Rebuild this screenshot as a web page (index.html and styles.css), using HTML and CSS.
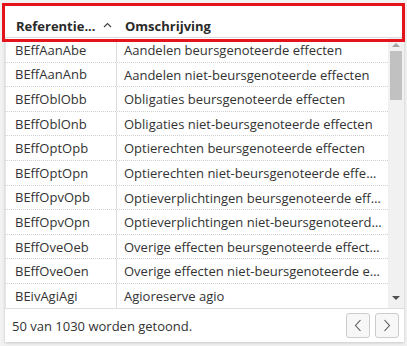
FILE: index.html
```html
<!DOCTYPE html>
<html lang="nl">
<head>
    <meta charset="UTF-8">
    <title>Referenties</title>
    <link rel="stylesheet" href="styles.css">
</head>
<body>
    <div class="panel">
        <!-- header row -->
        <div class="head">
            <div class="hcell ref"><span class="label">Referentie...</span>
                <svg class="sort" width="9" height="6" viewBox="0 0 9 6"><path d="M1 5 L4.5 1.5 L8 5" fill="none" stroke="#444" stroke-width="1.2"/></svg>
            </div>
            <div class="hcell desc">Omschrijving</div>
        </div>
        <div class="highlight"></div>

        <div class="body">
            <div class="rows">
                <div class="row"><div class="cell ref">BEffAanAbe</div><div class="cell desc">Aandelen beursgenoteerde effecten</div></div>
                <div class="row"><div class="cell ref">BEffAanAnb</div><div class="cell desc">Aandelen niet-beursgenoteerde effecten</div></div>
                <div class="row"><div class="cell ref">BEffOblObb</div><div class="cell desc">Obligaties beursgenoteerde effecten</div></div>
                <div class="row"><div class="cell ref">BEffOblOnb</div><div class="cell desc">Obligaties niet-beursgenoteerde effecten</div></div>
                <div class="row"><div class="cell ref">BEffOptOpb</div><div class="cell desc">Optierechten beursgenoteerde effecten</div></div>
                <div class="row"><div class="cell ref">BEffOptOpn</div><div class="cell desc">Optierechten niet-beursgenoteerde effecten</div></div>
                <div class="row"><div class="cell ref">BEffOpvOpb</div><div class="cell desc">Optieverplichtingen beursgenoteerde effecten</div></div>
                <div class="row"><div class="cell ref">BEffOpvOpn</div><div class="cell desc">Optieverplichtingen niet-beursgenoteerde effecten</div></div>
                <div class="row"><div class="cell ref">BEffOveOeb</div><div class="cell desc">Overige effecten beursgenoteerde effecten</div></div>
                <div class="row"><div class="cell ref">BEffOveOen</div><div class="cell desc">Overige effecten niet-beursgenoteerde effecten</div></div>
                <div class="row last"><div class="cell ref">BEivAgiAgi</div><div class="cell desc">Agioreserve agio</div></div>
            </div>
            <!-- fake scrollbar -->
            <div class="scrollbar">
                <div class="arrow up"></div>
                <div class="track"><div class="thumb"></div></div>
                <div class="arrow down"></div>
            </div>
        </div>

        <div class="foot">
            <span>50 van 1030 worden getoond.</span>
            <div class="pager">
                <button class="btn"><svg width="8" height="13" viewBox="0 0 8 13"><path d="M6.5 1 L1.5 6.5 L6.5 12" fill="none" stroke="#555" stroke-width="1.1"/></svg></button>
                <button class="btn"><svg width="8" height="13" viewBox="0 0 8 13"><path d="M1.5 1 L6.5 6.5 L1.5 12" fill="none" stroke="#555" stroke-width="1.1"/></svg></button>
            </div>
        </div>
    </div>
</body>
</html>
```

FILE: styles.css
```css
*,::after,::before{margin: 0; box-sizing: border-box;}
html,body{height: 100%;}
body{margin: 0; padding: 4px 3px 4px 5px; background: #f2f2f2; font-family: "Open Sans", "DejaVu Sans", sans-serif; color: #333;}
.panel{position: relative; width: 399px; height: 338px; background: #fff; box-shadow: 0 1px 3px rgba(0,0,0,.18); display: flex; flex-direction: column;}

.head{display: flex; height: 34px; border-bottom: 1px solid #ddd; flex-shrink: 0;}
.hcell{font-size: 13px; font-weight: 700; color: #2a2a2a; display: flex; align-items: flex-end; padding: 0 0 2px 0; white-space: nowrap;}
.hcell.ref{flex: none; width: 112px; padding-left: 11px; overflow: hidden;}
.hcell.desc{padding-left: 8px;}
.sort{flex: none; margin: 0 0 7px 7px;}

/* red marker around the header */
.highlight{position: absolute; left: -3px; top: -1px; width: 403px; height: 39px; border: 3px solid #e3141c;}

.body{display: flex; flex: none; height: 270px;}
.rows{flex: 1; min-width: 0;}
.row{display: flex; height: 24.6px; border-bottom: 1px dotted #cfcfcf; font-size: 13px;}
.row.last{border-bottom: none;}
.cell{display: flex; align-items: center; white-space: nowrap; overflow: hidden;}
.cell.ref{width: 112px; padding-left: 9px; border-right: 1px solid #ddd; border-left: 1px solid #e6e6e6;}
.cell.desc{flex: 1; min-width: 0; padding: 0 6px 0 7px; display: block; line-height: 24px; text-overflow: ellipsis;}

.scrollbar{width: 16px; background: #f1f1f1; display: flex; flex-direction: column; align-items: center;}
.arrow{width: 0; height: 0; border-left: 4px solid transparent; border-right: 4px solid transparent;}
.arrow.up{border-bottom: 4px solid #a3a3a3; margin: 5px 0 4px;}
.arrow.down{border-top: 4px solid #505050; margin: 5px 0 8px;}
.track{flex: 1; width: 100%; padding: 0 2px;}
.thumb{height: 49px; background: #c1c1c1;}

.foot{flex: 1; border-top: 1px solid #ddd; display: flex; align-items: center; justify-content: space-between; padding: 0 5px 0 7px; font-size: 13px; color: #333;}
.pager{display: flex; gap: 5px;}
.btn{width: 24px; height: 25px; border: 1px solid #ccc; border-radius: 3px; background: #f7f7f7; display: flex; align-items: center; justify-content: center; padding: 0; cursor: pointer;}
```
